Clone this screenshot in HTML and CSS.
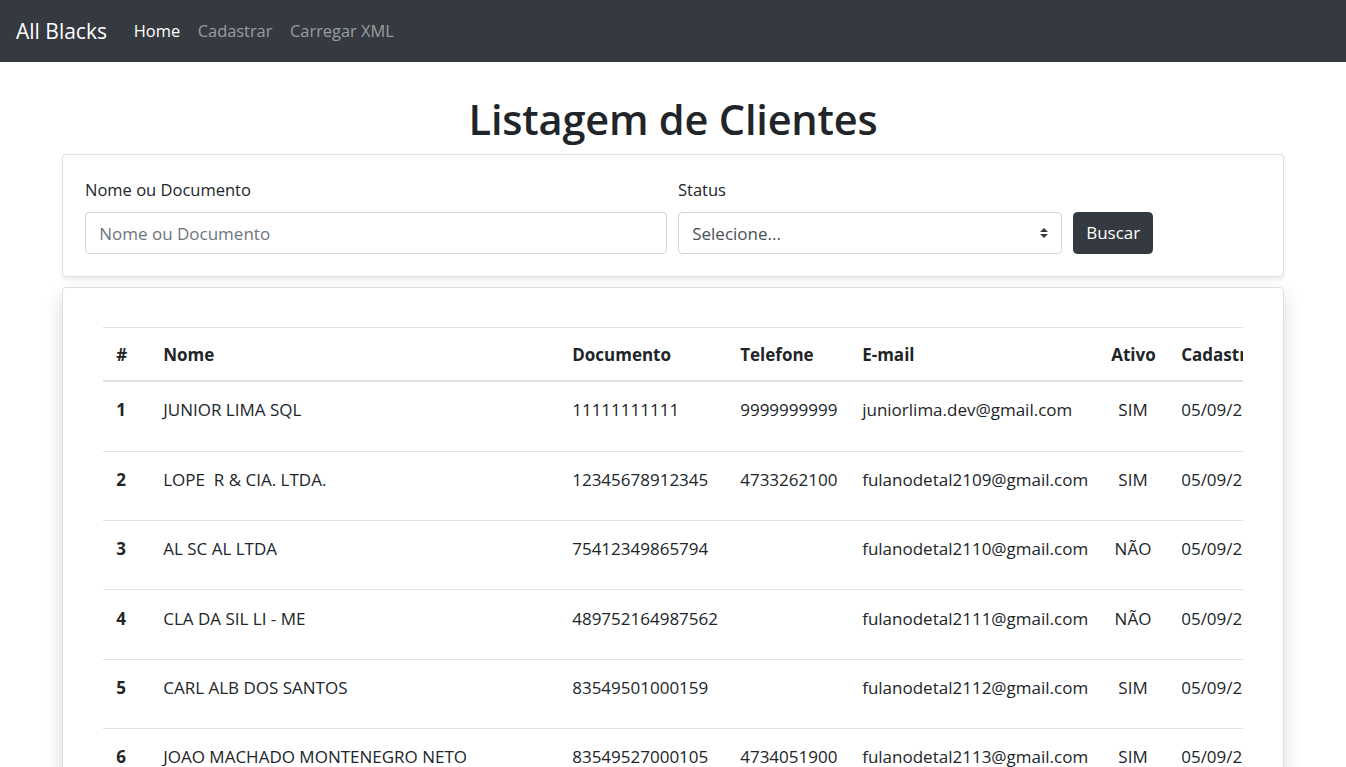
FILE: index.html
```html
<!DOCTYPE html>
<html lang="pt-BR">
<head>
<meta charset="utf-8">
<title>Listagem de Clientes</title>
<link rel="stylesheet" href="styles.css">
</head>
<body>
<nav class="navbar">
  <a class="brand" href="#">All Blacks</a>
  <ul class="nav">
    <li><a class="nav-link active" href="#">Home</a></li>
    <li><a class="nav-link" href="#">Cadastrar</a></li>
    <li><a class="nav-link" href="#">Carregar XML</a></li>
  </ul>
</nav>

<main class="container">
  <h1 class="title">Listagem de Clientes</h1>

  <section class="card card-filter">
    <form class="filter-row">
      <div class="field">
        <label for="q">Nome ou Documento</label>
        <input id="q" class="form-control" type="text" placeholder="Nome ou Documento">
      </div>
      <div class="field">
        <label for="status">Status</label>
        <div class="select-wrap">
          <select id="status" class="form-control custom-select">
            <option>Selecione...</option>
            <option>SIM</option>
            <option>NÃO</option>
          </select>
          <svg class="select-arrow" width="8" height="10" viewBox="0 0 4 5"><path fill="#343a40" d="M2 0L0 2h4zm0 5L0 3h4z"/></svg>
        </div>
      </div>
      <div class="field field-btn">
        <button type="button" class="btn btn-dark">Buscar</button>
      </div>
    </form>
  </section>

  <section class="card card-table">
    <div class="table-responsive">
      <table class="table">
        <colgroup>
          <col class="c-id"><col class="c-nome"><col class="c-doc"><col class="c-tel"><col class="c-mail"><col class="c-ativo"><col class="c-cad"><col class="c-acoes">
        </colgroup>
        <thead>
          <tr><th>#</th><th>Nome</th><th>Documento</th><th>Telefone</th><th>E-mail</th><th class="center">Ativo</th><th>Cadastro</th><th>Ações</th></tr>
        </thead>
        <tbody>
          <tr><th>1</th><td>JUNIOR LIMA SQL</td><td>11111111111</td><td>9999999999</td><td>juniorlima.dev@gmail.com</td><td class="center">SIM</td><td>05/09/2021</td><td><span class="btn btn-sm">Editar</span></td></tr>
          <tr><th>2</th><td>LOPE&nbsp; R &amp; CIA. LTDA.</td><td>12345678912345</td><td>4733262100</td><td>fulanodetal2109@gmail.com</td><td class="center">SIM</td><td>05/09/2021</td><td><span class="btn btn-sm">Editar</span></td></tr>
          <tr><th>3</th><td>AL SC AL LTDA</td><td>75412349865794</td><td></td><td>fulanodetal2110@gmail.com</td><td class="center">NÃO</td><td>05/09/2021</td><td><span class="btn btn-sm">Editar</span></td></tr>
          <tr><th>4</th><td>CLA DA SIL LI - ME</td><td>489752164987562</td><td></td><td>fulanodetal2111@gmail.com</td><td class="center">NÃO</td><td>05/09/2021</td><td><span class="btn btn-sm">Editar</span></td></tr>
          <tr><th>5</th><td>CARL ALB DOS SANTOS</td><td>83549501000159</td><td></td><td>fulanodetal2112@gmail.com</td><td class="center">SIM</td><td>05/09/2021</td><td><span class="btn btn-sm">Editar</span></td></tr>
          <tr><th>6</th><td>JOAO MACHADO MONTENEGRO NETO</td><td>83549527000105</td><td>4734051900</td><td>fulanodetal2113@gmail.com</td><td class="center">SIM</td><td>05/09/2021</td><td><span class="btn btn-sm">Editar</span></td></tr>
        </tbody>
      </table>
    </div>
  </section>
</main>
</body>
</html>
```
FILE: styles.css
```css
html { scrollbar-width: none; }
* { box-sizing: border-box; }
body {
  margin: 0;
  font-family: "Open Sans", "Noto Sans", sans-serif;
  font-size: 17px;
  line-height: 26.4px;
  color: #212529;
  background: #fff;
}

/* navbar */
.navbar {
  height: 62px;
  background: #343a40;
  display: flex;
  align-items: center;
  padding: 0 17.6px 0 16px;
}
.brand {
  color: #fff;
  text-decoration: none;
  font-size: 21px;
  margin-right: 18px;
}
.nav {
  list-style: none;
  display: flex;
  margin: 0;
  padding: 0;
}
.nav-link {
  display: block;
  padding: 0 8.8px;
  color: rgba(255,255,255,.5);
  text-decoration: none;
  font-size: 16.4px;
}
.nav-link.active { color: #fff; }

/* container */
.container {
  padding: 31px 62px 0;
}
.title {
  margin: 0 0 8px;
  text-align: center;
  font-size: 41.5px;
  line-height: 53px;
  font-weight: 600;
  letter-spacing: -0.2px;
}

.card {
  background: #fff;
  border: 1px solid rgba(0,0,0,.125);
  border-radius: 4.4px;
}
.card-filter {
  padding: 22px;
  box-shadow: 0 2.2px 4.4px rgba(0,0,0,.075);
  margin-bottom: 10px;
}
.filter-row {
  display: grid;
  grid-template-columns: 582px 384px auto;
  column-gap: 11px;
  align-items: end;
}
.field label {
  display: block;
  margin-bottom: 9px;
  font-size: 16.5px;
}
.form-control {
  display: block;
  width: 100%;
  height: 42px;
  padding: 6.6px 13.2px;
  font-family: inherit;
  font-size: 17px;
  color: #495057;
  background: #fff;
  border: 1px solid #ced4da;
  border-radius: 4.4px;
}
.form-control::placeholder { color: #6c757d; }
.select-wrap { position: relative; }
.custom-select {
  appearance: none;
  -webkit-appearance: none;
  padding-right: 30px;
}
.select-arrow {
  position: absolute;
  right: 14px;
  top: 16px;
  pointer-events: none;
}
.btn {
  display: inline-block;
  height: 42px;
  padding: 6.6px 13.2px;
  font-family: inherit;
  font-size: 17px;
  line-height: 26.4px;
  border: 1px solid transparent;
  border-radius: 4.4px;
}
.btn-dark {
  background: #343a40;
  border-color: #343a40;
  color: #fff;
  padding: 6.6px 12.2px;
}
.btn-sm {
  background: #ffc107;
  color: #212529;
}

.card-table {
  padding: 39px 40px 40px;
  box-shadow: 0 8.8px 17.6px rgba(0,0,0,.15);
}
.table-responsive {
  overflow: hidden;
}
.table {
  width: 1500px;
  table-layout: fixed;
  border-collapse: collapse;
}
.c-id { width: 47px; }
.c-nome { width: 409px; }
.c-doc { width: 168px; }
.c-tel { width: 122px; }
.c-mail { width: 249px; }
.c-ativo { width: 70px; }
.c-cad { width: 140px; }
.c-acoes { width: 295px; }
.table th, .table td {
  padding: 15.2px 13.2px 11.2px;
  text-align: left;
  vertical-align: top;
  border-top: 1px solid #dee2e6;
  white-space: nowrap;
}
.table thead th {
  padding: 13.2px 13.2px 12.2px;
  border-bottom: 2px solid #dee2e6;
  font-weight: 700;
}
.table tbody th { font-weight: 700; }
.table .center { text-align: center; }
```
